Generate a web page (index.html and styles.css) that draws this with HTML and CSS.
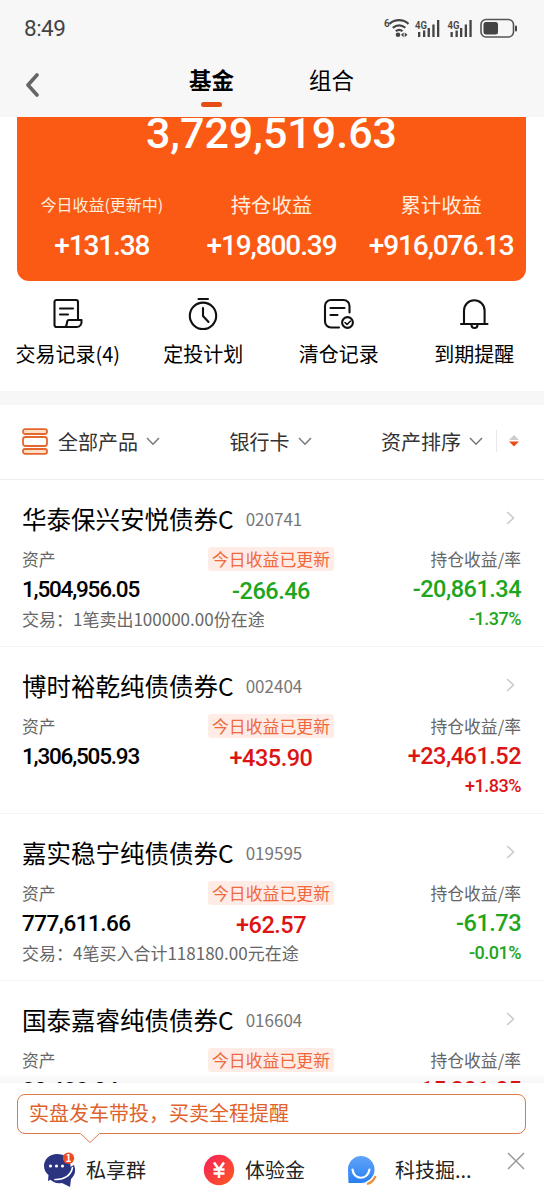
FILE: index.html
```html
<!DOCTYPE html>
<html lang="zh-CN">
<head>
    <meta charset="UTF-8">
    <meta name="viewport" content="width=device-width, initial-scale=1.0">
    <title>基金</title>
    <link rel="stylesheet" href="styles.css">
</head>
<body>
    <div class="page">
        <!-- Status bar + tabs -->
        <header class="header">
            <div class="status">
                <span class="time num">8:49</span>
                <svg class="status-icons" width="136" height="24" viewBox="0 0 136 24" fill="#444">
                    <text x="0" y="11" font-size="10" font-weight="600">6</text>
                    <g fill="none" stroke="#444" stroke-width="2.2">
                        <path d="M5.500 7.800c5.500-4.800 13.500-4.800 19 0"/>
                        <path d="M8.800 11.800c3.800-3.200 8.900-3.200 12.500 0"/>
                        <path d="M11.800 15.200c2.200-1.700 4.700-1.700 6.700 0"/>
                    </g>
                    <circle cx="14" cy="18.800" r="2.300"/>
                    <path d="M17 18.800l2.600-2.400v4.800zM23.500 18.800l-2.800-2.400v4.800z"/>
                    <text x="31" y="12.500" font-size="11.500" font-weight="600" textLength="12" lengthAdjust="spacingAndGlyphs">4G</text>
                    <path d="M34 16h2.300v5H34zM39 14.500h2.300V21H39zM43.600 12h2.300v9h-2.300zM48.300 8.500h2.300V21h-2.300zM53 4h2.300v17H53z"/>
                    <text x="63.500" y="12.500" font-size="11.500" font-weight="600" textLength="12" lengthAdjust="spacingAndGlyphs">4G</text>
                    <path d="M66.500 16h2.300v5h-2.300zM71.500 14.500h2.300V21h-2.300zM76 12h2.300v9H76zM80.700 8.500H83V21h-2.300zM85.400 4h2.300v17h-2.300z"/>
                    <rect x="97" y="3.500" width="32.500" height="17.500" rx="5" fill="none" stroke="#555" stroke-width="1.600"/>
                    <rect x="99.500" y="6" width="14.500" height="12.500" rx="2.500"/>
                    <rect x="131" y="9.500" width="2" height="6" rx="1"/>
                </svg>
            </div>
            <nav class="tabs">
                <svg class="back" width="14" height="26" viewBox="0 0 14 26"><path d="M12 3L3 13l9 10" fill="none" stroke="#666" stroke-width="3.600" stroke-linecap="round" stroke-linejoin="round"/></svg>
                <span class="tab active">基金</span>
                <span class="tab">组合</span>
            </nav>
        </header>

        <!-- Asset card -->
        <section class="card">
            <div class="total num">3,729,519.63</div>
            <div class="stats">
                <div class="stat"><span class="stat-label small">今日收益(更新中)</span><span class="stat-value num">+131.38</span></div>
                <div class="stat"><span class="stat-label">持仓收益</span><span class="stat-value num">+19,800.39</span></div>
                <div class="stat"><span class="stat-label">累计收益</span><span class="stat-value num">+916,076.13</span></div>
            </div>
        </section>

        <section class="shortcuts">
            <div class="shortcut">
                <svg width="34" height="36" viewBox="0 0 34 36"><path d="M17 30H5.500a2 2 0 0 1-2-2V5a2 2 0 0 1 2-2H25a2 2 0 0 1 2 2v18M9 11.500h13M9 17.500h8M13.500 30c2.500 0 2-2 2.700-5.500.2-1 .8-1.500 1.800-1.500h12.500c.5 4-1.300 7-4.500 7z"/></svg>
                <span>交易记录(4)</span>
            </div>
            <div class="shortcut">
                <svg width="34" height="36" viewBox="0 0 34 36"><path d="M12.500 2h9.500M17 11v8l5.500 6"/><circle cx="17" cy="18.800" r="13.200"/></svg>
                <span>定投计划</span>
            </div>
            <div class="shortcut">
                <svg width="34" height="36" viewBox="0 0 34 36"><path d="M17 30.500H9a6 6 0 0 1-6-6V9a6 6 0 0 1 6-6h12.500a6 6 0 0 1 6 6v6.500M8.500 11h14M8.500 18h7"/><circle cx="25.500" cy="25.500" r="5.400"/><path d="M23 25.500l2 2 3.300-3.300" stroke-width="1.600"/></svg>
                <span>清仓记录</span>
            </div>
            <div class="shortcut">
                <svg width="34" height="36" viewBox="0 0 34 36"><path d="M4 27h26.500M7 27V13.500a10.300 10.300 0 0 1 20.600 0V27M14.500 28a3 3 0 0 0 6 0"/></svg>
                <span>到期提醒</span>
            </div>
        </section>

        <section class="filters">
            <div class="filter">
                <svg class="layers" width="26" height="27" viewBox="0 0 26 27" fill="#ffe0c4" stroke="#e5672f" stroke-width="1.800"><rect x="1" y="1.200" width="24" height="4.800" rx="2"/><rect x="1" y="9" width="24" height="9" rx="2.500" fill="#fff"/><rect x="1" y="21" width="24" height="4.800" rx="2"/></svg>
                <span>全部产品</span>
                <svg class="down" width="14" height="9" viewBox="0 0 14 9"><path d="M1 1l6 6.200L13 1"/></svg>
            </div>
            <div class="filter">
                <span>银行卡</span>
                <svg class="down" width="14" height="9" viewBox="0 0 14 9"><path d="M1 1l6 6.200L13 1"/></svg>
            </div>
            <div class="filter">
                <span>资产排序</span>
                <svg class="down" width="14" height="9" viewBox="0 0 14 9"><path d="M1 1l6 6.200L13 1"/></svg>
                <i class="line"></i>
                <svg width="10" height="12" viewBox="0 0 10 12"><path d="M0 5l5-5 5 5z" fill="#ccc"/><path d="M0 6.500h10l-5 5z" fill="#e84e14"/></svg>
            </div>
        </section>

        <main class="list">
            <article class="fund">
                <div class="fund-head">
                    <h2>华泰保兴安悦债券C</h2><span class="code">020741</span>
                    <svg class="go" width="9" height="14" viewBox="0 0 9 14"><path d="M1 1l6.500 6L1 13"/></svg>
                </div>
                <div class="fund-body">
                    <div class="left"><span class="label">资产</span><b class="value long num">1,504,956.05</b><span class="note">交易：1笔卖出100000.00份在途</span></div>
                    <div class="mid"><span class="chip">今日收益已更新</span><b class="value num green">-266.46</b></div>
                    <div class="right"><span class="label">持仓收益/率</span><b class="value num green">-20,861.34</b><b class="rate num green">-1.37%</b></div>
                </div>
            </article>
            <article class="fund">
                <div class="fund-head">
                    <h2>博时裕乾纯债债券C</h2><span class="code">002404</span>
                    <svg class="go" width="9" height="14" viewBox="0 0 9 14"><path d="M1 1l6.500 6L1 13"/></svg>
                </div>
                <div class="fund-body">
                    <div class="left"><span class="label">资产</span><b class="value long num">1,306,505.93</b></div>
                    <div class="mid"><span class="chip">今日收益已更新</span><b class="value num red">+435.90</b></div>
                    <div class="right"><span class="label">持仓收益/率</span><b class="value num red">+23,461.52</b><b class="rate num red">+1.83%</b></div>
                </div>
            </article>
            <article class="fund">
                <div class="fund-head">
                    <h2>嘉实稳宁纯债债券C</h2><span class="code">019595</span>
                    <svg class="go" width="9" height="14" viewBox="0 0 9 14"><path d="M1 1l6.500 6L1 13"/></svg>
                </div>
                <div class="fund-body">
                    <div class="left"><span class="label">资产</span><b class="value num">777,611.66</b><span class="note">交易：4笔买入合计118180.00元在途</span></div>
                    <div class="mid"><span class="chip">今日收益已更新</span><b class="value num red">+62.57</b></div>
                    <div class="right"><span class="label">持仓收益/率</span><b class="value num green">-61.73</b><b class="rate num green">-0.01%</b></div>
                </div>
            </article>
            <article class="fund">
                <div class="fund-head">
                    <h2>国泰嘉睿纯债债券C</h2><span class="code">016604</span>
                    <svg class="go" width="9" height="14" viewBox="0 0 9 14"><path d="M1 1l6.500 6L1 13"/></svg>
                </div>
                <div class="fund-body">
                    <div class="left"><span class="label">资产</span><b class="value num">80,488.04</b></div>
                    <div class="mid"><span class="chip">今日收益已更新</span></div>
                    <div class="right"><span class="label">持仓收益/率</span><b class="value num red">+15,301.05</b></div>
                </div>
            </article>
        </main>

        <!-- Bottom promo bar, floats over the list -->
        <footer class="dock">
            <div class="tip">实盘发车带投，买卖全程提醒
                <svg class="tip-arrow" width="20" height="11" viewBox="0 0 20 11"><path d="M0 0h20L10 10z" fill="#fff"/><path d="M.5.500L10 9.500 19.500.500" fill="none" stroke="#dd7a4a"/></svg>
            </div>
            <div class="dock-items">
                <div class="dock-item group">
                    <svg width="34" height="36" viewBox="0 0 34 36">
                        <path d="M31 13c3 8-1 12-3 14l-1 8-8-4c-6 1-10-1-13-5z" fill="#2b3480"/>
                        <path d="M14 2C6.500 2 1 7.500 1 14c0 4 2 7 4.500 9l-.5 6 7-3.500C21 27 27.500 21.500 27.500 14S21.500 2 14 2z" fill="#2b3480"/>
                        <path d="M12 27.500c9 .5 16-4 17.500-12" fill="none" stroke="#fff" stroke-width="1.600" stroke-linecap="round"/>
                        <g fill="#fff"><circle cx="7.500" cy="14" r="1.600"/><circle cx="13.500" cy="14" r="1.600"/><circle cx="19.500" cy="14" r="1.600"/></g>
                        <circle cx="25.500" cy="6.300" r="5.700" fill="#ee4b22"/>
                        <text x="25.500" y="10" font-size="10" font-weight="700" text-anchor="middle" fill="#fff">1</text>
                    </svg>
                    <span>私享群</span>
                </div>
                <div class="dock-item bonus">
                    <svg width="32" height="32" viewBox="0 0 32 32">
                        <defs><linearGradient id="yen" x1="0" y1="0" x2="1" y2="1"><stop offset="0" stop-color="#f5205c"/><stop offset="1" stop-color="#ff5a20"/></linearGradient></defs>
                        <circle cx="16" cy="16" r="15.200" fill="url(#yen)"/>
                        <path d="M11 8.500l5 7 5-7M10.500 15.500h11M10.500 19.500h11M16 15.500v8.500" fill="none" stroke="#fff" stroke-width="2.500"/>
                    </svg>
                    <span>体验金</span>
                </div>
                <div class="dock-item tech">
                    <svg width="30" height="30" viewBox="0 0 30 30">
                        <defs><linearGradient id="chat" x1="0" y1="0" x2="0" y2="1"><stop offset="0" stop-color="#62a4f8"/><stop offset="1" stop-color="#2680f2"/></linearGradient></defs>
                        <path d="M14 1a13.500 13.500 0 1 1 0 27H1.500L1 15A13.200 13.200 0 0 1 14 1z" fill="url(#chat)"/>
                        <path d="M5.500 14.500c1.500 11 15 11 17 0" fill="none" stroke="#fff" stroke-width="2.200" stroke-linecap="round"/>
                        <path d="M20 29c4-1 7-4 8.500-8" fill="none" stroke="#fff" stroke-width="5"/>
                        <path d="M20 29c4-1 7-4 8.500-8" fill="none" stroke="#e8923e" stroke-width="2.200"/>
                    </svg>
                    <span>科技掘...</span>
                </div>
                <svg class="close" width="18" height="18" viewBox="0 0 18 18"><path d="M1 1l16 16M17 1L1 17" stroke="#999" stroke-width="1.500"/></svg>
            </div>
        </footer>
    </div>
</body>
</html>
```

FILE: styles.css
```css
* {
    box-sizing: border-box;
}

body {
    margin: 0;
    font-family: "Noto Sans CJK SC", sans-serif;
    color: #000;
    background: #fff;
}

svg {
    display: block;
    flex-shrink: 0;
}

.num {
    font-family: Roboto, "Noto Sans CJK SC", sans-serif;
}

.page {
    position: relative;
    height: 1200px;
    overflow: hidden;
}

/* header */
.header {
    height: 117px;
    background: #f7f7f7;
}

.status {
    display: flex;
    justify-content: space-between;
    align-items: center;
    height: 56px;
    padding: 0 24px;
}

.time {
    font-size: 22.5px;
    color: #444;
    letter-spacing: -0.5px;
}

.status-icons {
    font-family: Roboto, sans-serif;
}

.tabs {
    display: flex;
    align-items: center;
    height: 51px;
    padding-left: 25px;
    font-size: 22.5px;
}

.back {
    margin: 6px 150px 0 0;
}

.tab {
    display: flex;
    flex-direction: column;
    align-items: center;
    height: 51px;
    line-height: 47px;
    margin-right: 75px;
}

.tab.active {
    font-weight: 700;
}

.tab.active::after {
    content: "";
    flex-shrink: 0;
    width: 21px;
    height: 5px;
    margin-top: -1px;
    border-radius: 3px;
    background: #e64d14;
}

/* asset card */
.card {
    height: 164px;
    margin: 0 18px 0 17px;
    overflow: hidden;
    border-radius: 0 0 12px 12px;
    background: #fb5a14;
    color: #fff;
}

.total {
    height: 72px;
    margin-top: -5px;
    line-height: 42px;
    text-align: center;
    font-size: 43px;
    font-weight: 500;
}

.stats {
    display: grid;
    grid-template-columns: repeat(3, 1fr);
}

.stat {
    display: flex;
    flex-direction: column;
    align-items: center;
    white-space: nowrap;
}

.stat-label {
    height: 41px;
    line-height: 41px;
    font-size: 20.4px;
    color: #ffeedd;
}

.stat-label.small {
    font-size: 16px;
}

.stat-value {
    height: 42px;
    line-height: 42px;
    font-size: 28px;
    font-weight: 500;
    letter-spacing: -1.1px;
}

/* shortcuts */
.shortcuts {
    display: grid;
    grid-template-columns: repeat(4, 1fr);
    height: 124px;
    padding: 16px 2px 0 0;
    border-bottom: 14px solid #f7f7f7;
    font-size: 20px;
}

.shortcut {
    display: flex;
    flex-direction: column;
    align-items: center;
    line-height: 42px;
}

.shortcut svg {
    fill: none;
    stroke: #111;
    stroke-width: 2.1;
    stroke-linecap: round;
    stroke-linejoin: round;
}

/* filters */
.filters {
    display: flex;
    justify-content: space-between;
    align-items: center;
    height: 75px;
    padding: 0 25px 2px 22px;
    border-bottom: 1px solid #eee;
    font-size: 20px;
    color: #333;
}

.filter {
    display: flex;
    align-items: center;
}

.layers {
    margin-right: 10px;
}

.down {
    margin-left: 8px;
    fill: none;
    stroke: #777;
    stroke-width: 1.5;
}

.line {
    width: 1px;
    height: 22px;
    margin: 0 12px 0 13px;
    background: #e8e8e8;
}

/* fund list */
.fund {
    height: 167px;
    padding: 20px 22px 0;
    border-bottom: 1px solid #f5f5f5;
}

.fund-head {
    display: flex;
    align-items: center;
    height: 36px;
}

.fund-head h2 {
    margin: 0;
    font-size: 24.5px;
    font-weight: 400;
}

.code {
    margin-left: 12px;
    font-size: 17px;
    color: #777;
}

.go {
    margin: 0 7px 0 auto;
    fill: none;
    stroke: #ccc;
    stroke-width: 1.6;
}

.fund-body {
    display: grid;
    grid-template-columns: 186px 126px 1fr;
    padding-top: 11px;
    white-space: nowrap;
}

.left,
.mid,
.right {
    display: flex;
    flex-direction: column;
}

.mid {
    align-items: center;
}

.right {
    align-items: flex-end;
    padding-right: 1px;
}

.label,
.note {
    height: 24px;
    line-height: 24px;
    font-size: 16.8px;
    color: #666;
}

.note {
    font-size: 17px;
}

.chip {
    height: 24px;
    padding: 0 4px;
    border-radius: 3px;
    background: #ffece6;
    line-height: 24px;
    font-size: 16.9px;
    color: #f0693c;
}

.value {
    height: 36px;
    line-height: 36px;
    font-size: 23.5px;
    font-weight: 500;
    letter-spacing: -0.5px;
}

.mid .value {
    line-height: 40px;
}

.left .value {
    font-size: 22.5px;
}

.left .long {
    letter-spacing: -1.2px;
}

.rate {
    height: 24px;
    line-height: 24px;
    font-size: 18px;
    font-weight: 500;
    letter-spacing: -0.5px;
}

.green {
    color: #20a520;
}

.red {
    color: #dc1414;
}

/* bottom dock */
.dock {
    position: absolute;
    left: 0;
    right: 0;
    bottom: 0;
    height: 117px;
    padding: 11px 18px 0 17px;
    background: #fff;
}

/* soft shade above the dock */
.dock::before {
    content: "";
    position: absolute;
    left: 0;
    right: 0;
    top: -11px;
    height: 11px;
    background: linear-gradient(rgba(0, 0, 0, 0), rgba(0, 0, 0, 0.035));
}

.tip {
    position: relative;
    height: 40px;
    padding-left: 11px;
    border: 1px solid #dd7a4a;
    border-radius: 8px;
    line-height: 36px;
    font-size: 20px;
    color: #e0622c;
}

.tip-arrow {
    position: absolute;
    left: 62px;
    top: 38px;
}

.dock-items {
    display: flex;
    align-items: center;
    height: 71px;
    font-size: 20px;
    color: #222;
}

.dock-item {
    display: flex;
    align-items: center;
    gap: 10px;
}

.group {
    gap: 9px;
    width: 186px;
    padding-left: 26px;
}

.bonus {
    width: 144px;
}

.tech {
    gap: 18px;
}

.close {
    margin: -17px 1px 0 auto;
}
```
